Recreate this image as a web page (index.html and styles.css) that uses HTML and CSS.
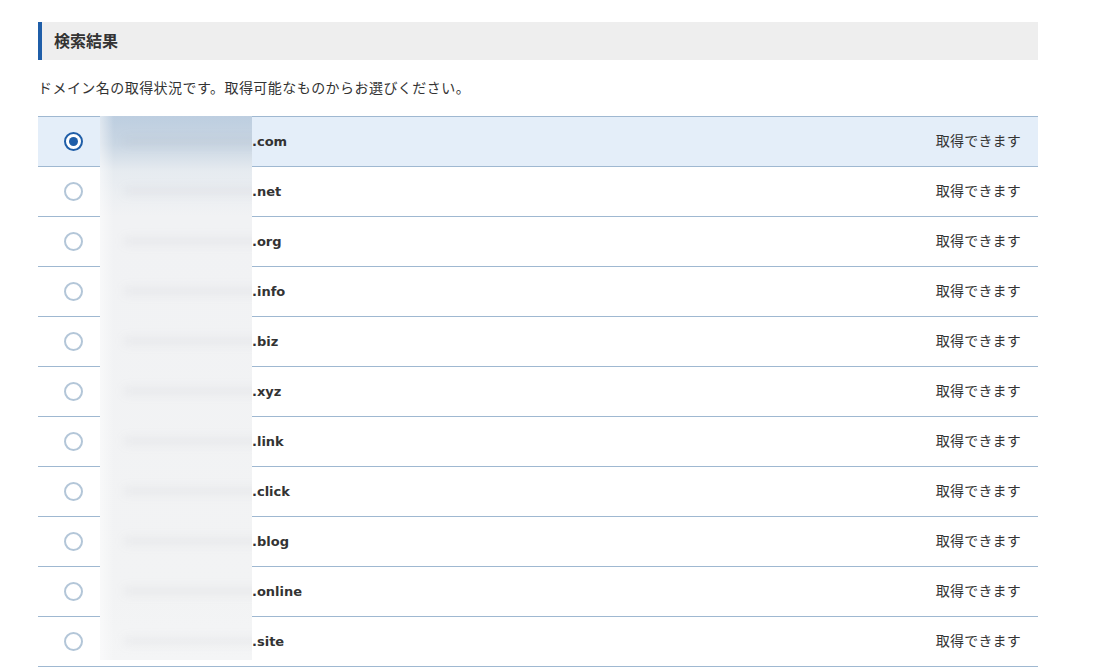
FILE: index.html
```html
<!DOCTYPE html>
<html lang="ja">
<head>
<meta charset="utf-8">
<title>検索結果</title>
<link rel="stylesheet" href="styles.css">
</head>
<body>
<div class="page">
  <h2 class="section-title">検索結果</h2>
  <p class="lead">ドメイン名の取得状況です。取得可能なものからお選びください。</p>
  <div class="results">
    <div class="row selected"><span class="radio on"></span><span class="domain">.com</span><span class="status">取得できます</span></div>
    <div class="row"><span class="radio"></span><span class="domain">.net</span><span class="status">取得できます</span></div>
    <div class="row"><span class="radio"></span><span class="domain">.org</span><span class="status">取得できます</span></div>
    <div class="row"><span class="radio"></span><span class="domain">.info</span><span class="status">取得できます</span></div>
    <div class="row"><span class="radio"></span><span class="domain">.biz</span><span class="status">取得できます</span></div>
    <div class="row"><span class="radio"></span><span class="domain">.xyz</span><span class="status">取得できます</span></div>
    <div class="row"><span class="radio"></span><span class="domain">.link</span><span class="status">取得できます</span></div>
    <div class="row"><span class="radio"></span><span class="domain">.click</span><span class="status">取得できます</span></div>
    <div class="row"><span class="radio"></span><span class="domain">.blog</span><span class="status">取得できます</span></div>
    <div class="row"><span class="radio"></span><span class="domain">.online</span><span class="status">取得できます</span></div>
    <div class="row"><span class="radio"></span><span class="domain">.site</span><span class="status">取得できます</span></div>
    <div class="mask">
      <div class="smudge"></div><div class="smudge"></div><div class="smudge"></div><div class="smudge"></div>
      <div class="smudge"></div><div class="smudge"></div><div class="smudge"></div><div class="smudge"></div>
      <div class="smudge"></div><div class="smudge"></div><div class="smudge"></div>
    </div>
  </div>
</div>
</body>
</html>
```
FILE: styles.css
```css
html, body {
  margin: 0;
  padding: 0;
  background: #ffffff;
}
body {
  font-family: "Noto Sans CJK JP", "Noto Sans", sans-serif;
  color: #333333;
  font-size: 14px;
}
.page {
  width: 1000px;
  padding: 22px 0 0 38px;
}
.section-title {
  margin: 0;
  height: 38px;
  box-sizing: border-box;
  background: #eeeeee;
  border-left: 4px solid #1f5ea8;
  padding-left: 12px;
  padding-bottom: 2px;
  font-size: 16px;
  font-weight: bold;
  line-height: 36px;
  color: #333333;
}
.lead {
  margin: 18px 0 18px 0;
  padding-bottom: 2px;
  height: 18px;
  line-height: 18px;
  font-size: 14px;
  letter-spacing: 0.45px;
  color: #333333;
}
.results {
  position: relative;
  border-top: 1px solid #9fb8d1;
}
.row {
  display: flex;
  align-items: center;
  height: 49px;
  border-bottom: 1px solid #9fb8d1;
}
.row.selected {
  background: #e4eef9;
}
.radio {
  box-sizing: border-box;
  width: 19px;
  height: 19px;
  margin-left: 26px;
  border: 2px solid #b3c6d8;
  border-radius: 50%;
  background: #ffffff;
  flex: none;
  position: relative;
}
.radio.on {
  border: 2.5px solid #1f5ea8;
}
.radio.on::after {
  content: "";
  position: absolute;
  left: 50%;
  top: 50%;
  width: 9px;
  height: 9px;
  margin: -4.5px 0 0 -4.5px;
  border-radius: 50%;
  background: #1f5ea8;
}
.domain {
  margin-left: 169px;
  font-family: "DejaVu Sans", Verdana, sans-serif;
  font-weight: bold;
  font-size: 13px;
  color: #333333;
}
.status {
  margin-left: auto;
  margin-right: 17px;
  margin-bottom: 3px;
  font-size: 14px;
  line-height: 18px;
  letter-spacing: 0.2px;
  color: #333333;
}
.mask {
  position: absolute;
  left: 62px;
  top: -1px;
  width: 152px;
  height: 544px;
  overflow: hidden;
  display: flex;
  flex-direction: column;
  background: linear-gradient(to bottom, #bdcee0 0px, #c9d6e3 28px, #e6ebf0 55px, #f1f2f4 100px, #f2f3f4 480px, #f4f5f6 544px);
}
.mask::before {
  content: "";
  position: absolute;
  left: 0;
  top: 0;
  bottom: 0;
  width: 14px;
  background: linear-gradient(to right, rgba(255, 255, 255, 0.5), rgba(255, 255, 255, 0));
}
.smudge {
  height: 50px;
  flex: none;
  position: relative;
}
.smudge::before {
  content: "";
  position: absolute;
  left: 24px;
  right: -10px;
  top: 21px;
  height: 8px;
  background: rgba(140, 145, 150, 0.09);
  filter: blur(5px);
}
```
